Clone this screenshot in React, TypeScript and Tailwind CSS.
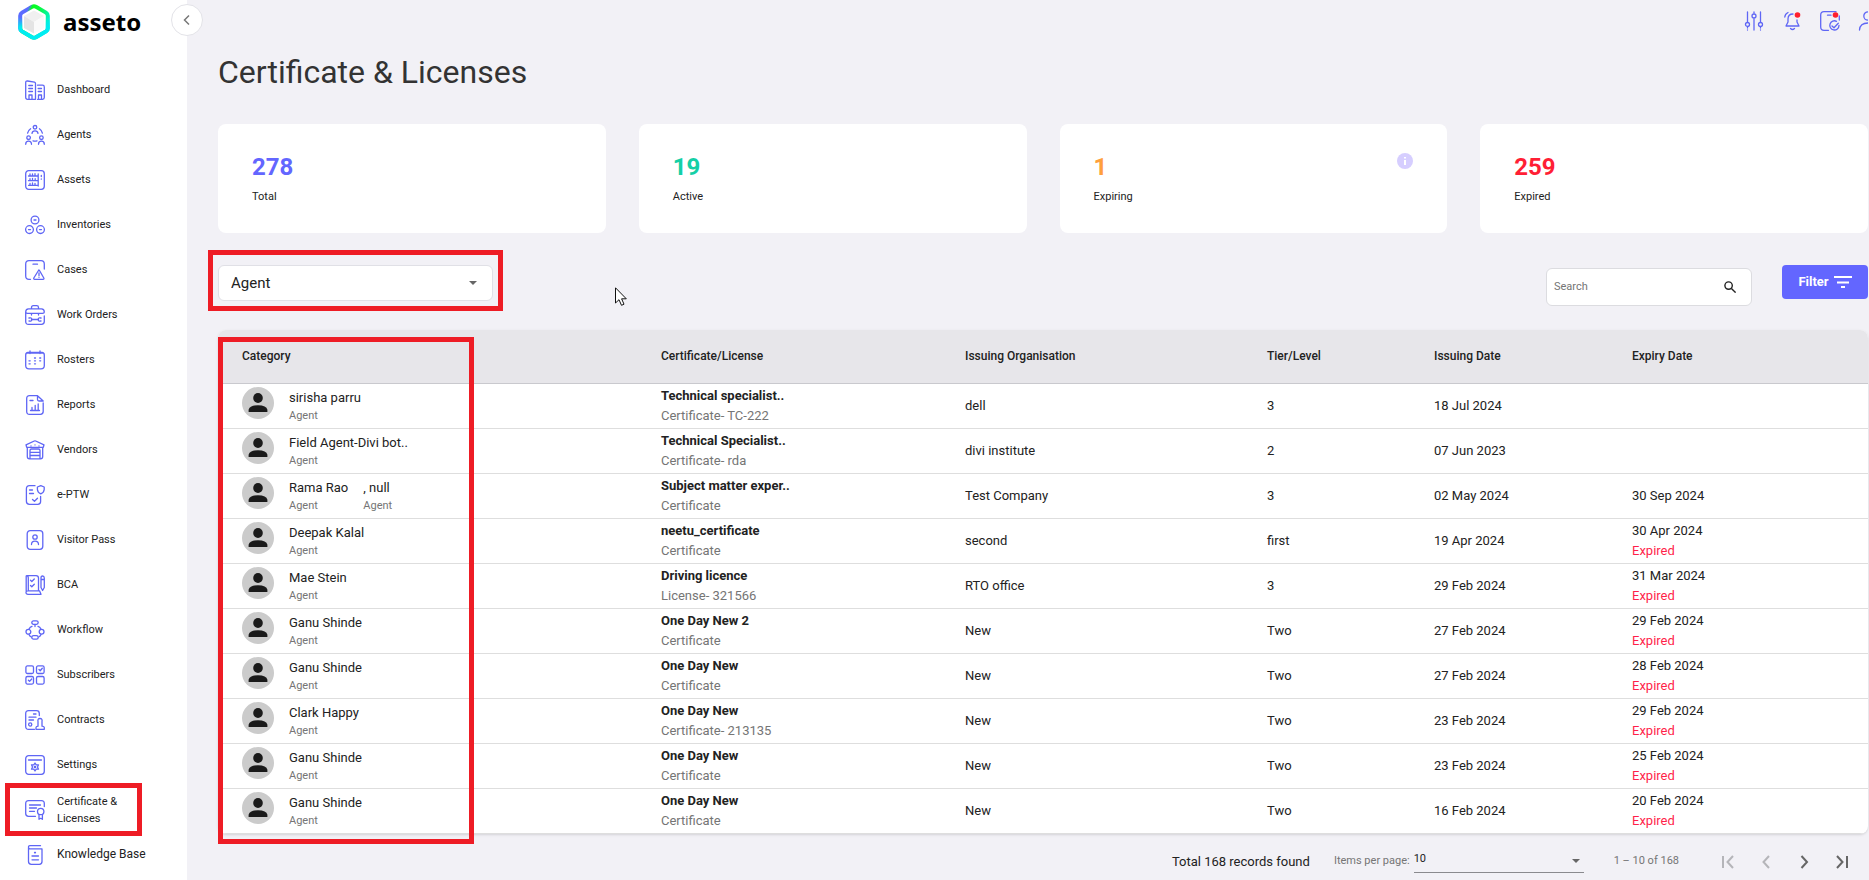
import type { ReactNode } from 'react'

const STATS = [
  { value: '278', label: 'Total', color: 'text-[#6366ff]' },
  { value: '19', label: 'Active', color: 'text-[#14cfa6]' },
  { value: '1', label: 'Expiring', color: 'text-[#ffa03c]', info: true },
  { value: '259', label: 'Expired', color: 'text-[#ff1f35]' },
]

interface Certificate {
  agents: string[]
  title: string
  ref: string
  org: string
  tier: string
  issued: string
  expiry?: string
  expired?: boolean
}

const ROWS: Certificate[] = [
  { agents: ['sirisha parru'], title: 'Technical specialist..', ref: 'Certificate- TC-222', org: 'dell', tier: '3', issued: '18 Jul 2024' },
  { agents: ['Field Agent-Divi bot..'], title: 'Technical Specialist..', ref: 'Certificate- rda', org: 'divi institute', tier: '2', issued: '07 Jun 2023' },
  { agents: ['Rama Rao', ', null'], title: 'Subject matter exper..', ref: 'Certificate', org: 'Test Company', tier: '3', issued: '02 May 2024', expiry: '30 Sep 2024' },
  { agents: ['Deepak Kalal'], title: 'neetu_certificate', ref: 'Certificate', org: 'second', tier: 'first', issued: '19 Apr 2024', expiry: '30 Apr 2024', expired: true },
  { agents: ['Mae Stein'], title: 'Driving licence', ref: 'License- 321566', org: 'RTO office', tier: '3', issued: '29 Feb 2024', expiry: '31 Mar 2024', expired: true },
  { agents: ['Ganu Shinde'], title: 'One Day New 2', ref: 'Certificate', org: 'New', tier: 'Two', issued: '27 Feb 2024', expiry: '29 Feb 2024', expired: true },
  { agents: ['Ganu Shinde'], title: 'One Day New', ref: 'Certificate', org: 'New', tier: 'Two', issued: '27 Feb 2024', expiry: '28 Feb 2024', expired: true },
  { agents: ['Clark Happy'], title: 'One Day New', ref: 'Certificate- 213135', org: 'New', tier: 'Two', issued: '23 Feb 2024', expiry: '29 Feb 2024', expired: true },
  { agents: ['Ganu Shinde'], title: 'One Day New', ref: 'Certificate', org: 'New', tier: 'Two', issued: '23 Feb 2024', expiry: '25 Feb 2024', expired: true },
  { agents: ['Ganu Shinde'], title: 'One Day New', ref: 'Certificate', org: 'New', tier: 'Two', issued: '16 Feb 2024', expiry: '20 Feb 2024', expired: true },
]

function LineIcon({ children }: { children: ReactNode }) {
  return (
    <svg
      viewBox="0 0 20 20"
      className="size-5 shrink-0 overflow-visible"
      fill="none"
      stroke="#5f66f5"
      strokeWidth="1.3"
      strokeLinecap="round"
      strokeLinejoin="round"
      aria-hidden="true"
    >
      {children}
    </svg>
  )
}

const NAV: { label: string; icon: ReactNode }[] = [
  {
    label: 'Dashboard',
    icon: <path d="M2.5 1 9.5 2.2Q10.5 2.4 10.5 3.5V19.3H2.5Q.7 19.3.7 17.5V2.5Q.7.8 2.5 1M12.5 5.2H17.5Q19.3 5.2 19.3 7V17.5Q19.3 19.3 17.5 19.3H12.5M3.8 5.5H7.5M3.8 8.5H7.5M3.8 11.5H7.5M13.2 8.5H16.5M13.2 11.5H16.5M4 19V15H7V19M13.5 19V15H16.5V19" />,
  },
  {
    label: 'Agents',
    icon: (
      <>
        <circle cx="10" cy="2.3" r="1.8" />
        <circle cx="3.6" cy="12.7" r="1.8" />
        <circle cx="16.4" cy="12.7" r="1.8" />
        <path d="M7 8.3Q7.3 5.8 10 5.8T13 8.3M.7 19.3Q.7 16.2 3.6 16.2T6.5 19.3M13.5 19.3Q13.5 16.2 16.4 16.2T19.3 19.3M2.6 8.2Q3.2 5.3 5.6 3.8M14.4 3.8Q16.8 5.3 17.4 8.2M8 15.8Q10 16.6 12 15.8" />
      </>
    ),
  },
  {
    label: 'Assets',
    icon: (
      <>
        <rect x=".7" y=".7" width="18.6" height="18.6" rx="3" />
        <path d="M3.5 6H13M3.5 10.7H13M3.5 15.3H13M13.2 4V16M5 4V6M7.5 4V6M10 3.7V6M5 8.7V10.7M7.5 8.5V10.7M10.2 8.7V10.7M5 13.3V15.3M7.5 13V15.3M10 13.3V15.3M16.3 5.5V6.5M16.3 9V9.2" />
      </>
    ),
  },
  {
    label: 'Inventories',
    icon: (
      <>
        <circle cx="10" cy="5" r="3.9" />
        <circle cx="4.5" cy="14.6" r="3.9" />
        <circle cx="15.5" cy="14.6" r="3.9" />
        <path d="M9 5H11M3.5 14.6H5.5M14.5 14.6H16.5" />
      </>
    ),
  },
  {
    label: 'Cases',
    icon: <path d="M5.5 19.3H4Q.7 19.3.7 16V4Q.7.7 4 .7H16Q19.3.7 19.3 4V9M8 4.2H12.5M13.8 10 8.8 18Q8.3 19.3 9.7 19.3H18Q19.4 19.3 18.8 18L14.2 10Q14 9.6 13.8 10M14 13V15.5M14 17.2V17.3" />,
  },
  {
    label: 'Work Orders',
    icon: (
      <>
        <path d="M6.5 3.5V2.5Q6.5.7 8.3.7H11.7Q13.5.7 13.5 2.5V3.5M19.3 11V16.5Q19.3 19.3 16.5 19.3H3.5Q.7 19.3.7 16.5V7Q.7 3.8 3.5 3.8H16.5Q19.3 3.8 19.3 7Q19.3 8.3 17.5 8.3H2.5Q.7 8.3.7 7M6.5 8.5V10M13.5 8.5V10M6.5 14.5H13.5" />
        <path d="M4 13Q6.8 12.3 6.8 14.5T4 16M16 13Q13.2 12.3 13.2 14.5T16 16" />
      </>
    ),
  },
  {
    label: 'Rosters',
    icon: <path d="M5 1V3.5M15 1V3.5M1.5 3H18.5M3 2.5H17Q19.3 2.7 19.3 5V15.5Q19.3 18.8 16 18.8H4Q.7 18.8.7 15.5V5Q.7 2.7 3 2.5M9.5 8H10.5M14.7 8H15.7M4 10.8H5.2M9.5 10.8H10.5M14.7 10.8H15.7M4 13.8H5.2M9.5 13.8H10.5" />,
  },
  {
    label: 'Reports',
    icon: <path d="M18.2 8V16.5Q18.2 19.3 15.4 19.3H4.5Q1.7 19.3 1.7 16.5V3.5Q1.7.7 4.5.7H12.5L18.2 6H14Q12.5 6 12.5 4.5V.7M5 5.5H8M5.5 15.5H14.5M7 15V12.5M10.2 15V10.5M13.2 15V8.8" />,
  },
  {
    label: 'Vendors',
    icon: <path d="M1 4.8 9.3 1Q10 .7 10.7 1L19 4.8L18.3 7.3H1.7ZM2.3 7.5V16.5Q2.3 18.8 4.5 18.8H15.5Q17.7 18.8 17.7 16.5V7.5M5 18.5V10.5Q5 9 6.5 9H13.5Q15 9 15 10.5V18.5M5.5 12.3H14.5M5.5 15.5H14.5M6 5.8V5.9M10 4.8V4.9M14 5.8V5.9" />,
  },
  {
    label: 'e-PTW',
    icon: <path d="M10 .7H4.5Q1.4.7 1.4 3.8V16.2Q1.4 19.3 4.5 19.3H12.8Q15.6 19.3 15.6 16.5V11.5M4.5 5H7.5M4.5 8.5H8.5M7.5 14.5 9.5 16.3 12.5 13.3M15.8.7 19.2 2V4.5Q19 7.5 15.8 8.8Q12.6 7.5 12.4 4.5V2Z" />,
  },
  {
    label: 'Visitor Pass',
    icon: (
      <>
        <rect x="2.2" y=".7" width="15.6" height="18.6" rx="3" />
        <circle cx="10" cy="7" r="2.2" />
        <path d="M6.5 14.5Q6.5 11.2 10 11.2T13.5 14.5" />
      </>
    ),
  },
  {
    label: 'BCA',
    icon: <path d="M3.3 15V3.5Q3.3.7 1.8.7H11Q13.5.7 13.5 3V15.5M1.2 1V16M3 15.8H14.5L16 19.3H3Q1 19.3 1 17.5T3 15.8M5.5 5.3 6.8 6.5 9.3 4M5.5 10.5 6.8 11.8 9.3 9.3M16 3Q16 1 17.6 1T19.3 3V12.5L17.6 15.5 16 12.5ZM16 4.5H19.3" />,
  },
  {
    label: 'Workflow',
    icon: (
      <>
        <rect x="6.8" y=".9" width="6.4" height="3.4" rx="1.7" />
        <rect x="6.8" y="15.7" width="6.4" height="3.4" rx="1.7" />
        <circle cx="3.4" cy="11.8" r="2.4" />
        <circle cx="16.6" cy="11.8" r="2.4" />
        <path d="M10 4.5V6.5M4.2 8.8Q5 7 7 6.3M13 6.3Q15 7 15.8 8.8M4 14.5Q4.6 16.3 6.3 17M16 14.5Q15.4 16.3 13.7 17" />
      </>
    ),
  },
  {
    label: 'Subscribers',
    icon: (
      <>
        <rect x=".9" y=".9" width="7.6" height="7.6" rx="1.5" />
        <rect x="11.5" y=".9" width="7.6" height="7.6" rx="1.5" />
        <rect x=".9" y="11.5" width="7.6" height="7.6" rx="1.5" />
        <rect x="11.5" y="11.5" width="7.6" height="7.6" rx="1.5" />
        <path d="M14 4.5 15.2 5.7 17.3 3.3M3.4 15.2 4.6 16.4 6.7 14" />
      </>
    ),
  },
  {
    label: 'Contracts',
    icon: (
      <>
        <path d="M9.5 19.3H3.5Q.7 19.3.7 16.5V3.5Q.7.7 3.5.7H11.5Q14.3.7 14.3 3.5V5.5M8.5 4H11M4 7.2H11M4 10H8.5M11 19.3V17.5Q11 16.5 13 16.2V11.5Q12.4 8.5 15 8.5T17 11.5V16.2Q19.3 16.5 19.3 17.5V19.3Z" />
        <circle cx="5.2" cy="14.5" r="1.6" />
      </>
    ),
  },
  {
    label: 'Settings',
    icon: (
      <>
        <rect x=".7" y=".7" width="18.6" height="18.6" rx="3" />
        <path d="M3.5 5H16.5M10 8 11.2 9.8 13.5 9.8 12.5 12 13.5 14.2 11.2 14.2 10 16 8.8 14.2 6.5 14.2 7.5 12 6.5 9.8 8.8 9.8Z" />
        <circle cx="10" cy="12" r=".7" />
      </>
    ),
  },
  {
    label: 'Certificate & Licenses',
    icon: (
      <>
        <path d="M19.3 6.5V3.5Q19.3.7 16.5.7H3.5Q.7.7.7 3.5V13.5Q.7 16.3 3.5 16.3H10.5M4.5 5H15.5M4.5 8H11.5M4.5 11.3H9.5M14 14.5V19.3L15.7 18.3 17.4 19.3V14.5" />
        <circle cx="15.7" cy="11.5" r="3.2" />
      </>
    ),
  },
  {
    label: 'Knowledge Base',
    icon: <path d="M3.5 3V16.5Q3.5 19.3 6.3 19.3H14.3Q17 19.3 17 16.5V3.8H5Q3.5 3.8 3.5 2.2T5 .7H15.5M9.5 7.5H10.5M7 11H13.5M7 14.8H13.5M10 7.5V8" />,
  },
]

function Logo() {
  return (
    <svg viewBox="0 0 32 36" className="h-9 w-8" aria-hidden="true">
      <defs>
        <linearGradient id="ring" x1="0" y1="0.1" x2="1" y2="0.6">
          <stop offset="0" stopColor="#5b6cff" />
          <stop offset="0.22" stopColor="#5b6cff" />
          <stop offset="0.32" stopColor="#05ff1b" />
          <stop offset="0.55" stopColor="#0bf93c" />
          <stop offset="1" stopColor="#00f0d8" />
        </linearGradient>
        <linearGradient id="ringBase" x1="0" y1="0" x2="0" y2="1">
          <stop offset="0" stopColor="#00ecf2" stopOpacity="0" />
          <stop offset="0.5" stopColor="#00ecf2" />
        </linearGradient>
      </defs>
      <path d="M14 2.8Q16 1.8 18 2.8L28 8.6Q29.8 9.7 29.8 11.8V24.2Q29.8 26.3 28 27.4L18 33.2Q16 34.2 14 33.2L4 27.4Q2.2 26.3 2.2 24.2V11.8Q2.2 9.7 4 8.6Z" fill="none" stroke="url(#ring)" strokeWidth="4" />
      <path d="M2.2 13V24.2Q2.2 26.3 4 27.4L14 33.2Q16 34.2 18 33.2L28 27.4Q29.8 26.3 29.8 24.2V13" fill="none" stroke="url(#ringBase)" strokeWidth="4" />
      <path d="M16 6.5 26 12 16 18 6 12Z" fill="#f0f0f0" />
      <path d="M6 12 16 18V29.5L6 24Z" fill="#e4e4e4" />
      <path d="M26 12 16 18V29.5L26 24Z" fill="#fafafa" />
    </svg>
  )
}

function Sidebar() {
  return (
    <aside className="relative w-[187px] shrink-0 bg-white">
      <div className="flex h-[43px] items-center gap-[13px] pl-[18px]">
        <Logo />
        <span className="font-['Noto_Sans'] text-2xl font-bold text-black">asseto</span>
      </div>
      <button
        aria-label="Collapse menu"
        className="absolute top-1 left-[171px] flex size-8 items-center justify-center rounded-full border border-[#e3e3e8] bg-white"
      >
        <svg viewBox="0 0 12 12" className="size-3" fill="none" stroke="#777" strokeWidth="1.5">
          <path d="M8 1.5 3.5 6 8 10.5" />
        </svg>
      </button>
      <nav className="mt-6">
        {NAV.map(item => (
          <a
            key={item.label}
            href="#"
            className={`relative flex h-[45px] items-center gap-3 pl-[25px] leading-[17px] text-[#222] ${
              item.label === 'Knowledge Base' ? 'text-xs' : 'text-[11px]'
            }`}
          >
            <LineIcon>{item.icon}</LineIcon>
            <span className="w-[100px] pr-2">{item.label}</span>
            {item.label === 'Certificate & Licenses' && (
              <span className="absolute -top-1 left-[5px] h-[53px] w-[137px] border-5 border-[#ee1c25]" />
            )}
          </a>
        ))}
      </nav>
    </aside>
  )
}

function TopBar() {
  return (
    <div className="flex h-[42px] items-center justify-end gap-[18px] overflow-hidden">
      <button aria-label="Preferences">
        <LineIcon>
          <path d="M3.5 1V11M3.5 16.5V17M3.5 19V19.1M10 8V19M10 1V2M16.5 1V11M16.5 16.5V17M16.5 19V19.1" />
          <circle cx="3.5" cy="13.5" r="2" />
          <circle cx="10" cy="5" r="2" />
          <circle cx="16.5" cy="13.5" r="2" />
        </LineIcon>
      </button>
      <button aria-label="Notifications">
        <LineIcon>
          <path d="M11 3Q6 3 6 8V11L4 15H17L15 11V9M8.5 17.5Q10.5 19.5 12.5 17.5M6 1.5Q3 3 2.8 6" />
          <circle cx="15.5" cy="4" r="2.8" fill="#ff1f2d" stroke="none" />
        </LineIcon>
      </button>
      <button aria-label="Tasks">
        <LineIcon>
          <path d="M8.5 19.3H4Q.7 19.3.7 16V4Q.7.7 4 .7H16M19.3 5V9M7.5 4.2H11M12 15 14 16.8 18.3 12.3" />
          <path d="M19 14.5A4.6 4.6 0 1 1 16.5 10.3" />
          <circle cx="15.5" cy="4" r="2.8" fill="#ff1f2d" stroke="none" />
        </LineIcon>
      </button>
      <button aria-label="Account" className="-mr-[10px]">
        <LineIcon>
          <circle cx="10" cy="5" r="4.2" />
          <path d="M1.5 19Q2 12 10 12T18.5 19" />
        </LineIcon>
      </button>
    </div>
  )
}

function Avatar() {
  return (
    <svg viewBox="0 0 32 32" className="size-8 shrink-0" aria-hidden="true">
      <circle cx="16" cy="16" r="16" fill="#cbcbcb" />
      <ellipse cx="16" cy="11" rx="4.8" ry="5" fill="#1a1a1a" />
      <path d="M6.6 25V22.8Q7.5 18.2 16 18.2T25.4 22.8V25Z" fill="#1a1a1a" />
    </svg>
  )
}

function StatCard({ value, label, color, info }: (typeof STATS)[number]) {
  return (
    <div className="flex h-[109px] items-start justify-between rounded-lg bg-white px-[34px] pt-[27px]">
      <div>
        <p className={`text-2xl leading-8 font-bold ${color}`}>{value}</p>
        <p className="mt-1 text-[11px] leading-5 text-[#222]">{label}</p>
      </div>
      {info && (
        <svg viewBox="0 0 16 16" className="mt-0.5 size-4" role="img" aria-label="Info">
          <circle cx="8" cy="8" r="8" fill="#d6ceff" />
          <path d="M8 4V5.6M8 7V12" stroke="#fff" strokeWidth="2" />
        </svg>
      )}
    </div>
  )
}

function Toolbar() {
  return (
    <div className="relative mt-8 flex items-start justify-between">
      <div className="relative w-[275px]">
        <select
          aria-label="Category"
          className="h-9 w-full appearance-none rounded-md border border-[#e0e0e6] bg-white pl-3 text-[15px] text-[#222]"
        >
          <option>Agent</option>
        </select>
        <svg viewBox="0 0 8 4" className="pointer-events-none absolute top-4 right-4 h-1 w-2">
          <path d="M0 0H8L4 4Z" fill="#666" />
        </svg>
        <span className="pointer-events-none absolute -inset-x-[10px] -top-[15px] -bottom-[10px] border-5 border-[#ee1c25]" />
      </div>
      <svg viewBox="0 0 12 19" className="absolute top-[22px] left-[397px] h-[19px] w-3">
        <path d="M.5.8V16L4 12.7 6.5 18.3 9 17.2 6.6 11.8H11.3Z" fill="#fff" stroke="#111" />
      </svg>
      <div className="flex items-start gap-[30px]">
        <label className="mt-[3px] flex h-[38px] w-[206px] items-center rounded-md border border-[#dcdce0] bg-white px-[7px]">
          <input
            aria-label="Search"
            placeholder="Search"
            className="w-full min-w-0 flex-1 bg-transparent text-[11px] outline-none placeholder:text-[#757575]"
          />
          <svg viewBox="0 0 12 12" className="mr-2 size-3" fill="none" stroke="#222" strokeWidth="1.4">
            <circle cx="4.6" cy="4.6" r="3.7" />
            <path d="M7.4 7.4 11.6 11.6" />
          </svg>
        </label>
        <button className="flex h-[34px] w-[86px] items-center justify-center gap-[5px] rounded bg-[#6366ff] text-[13px] font-bold text-white">
          Filter
          <svg viewBox="0 0 18 12" className="h-3 w-[18px]" stroke="#fff" strokeWidth="2">
            <path d="M0 1H18M3 6.5H15M7 11H11" />
          </svg>
        </button>
      </div>
    </div>
  )
}

function CertificateTable() {
  return (
    <div className="relative mt-6">
      <div className="overflow-hidden rounded-lg bg-white shadow-sm">
        <table className="w-full table-fixed border-collapse text-left text-[13px] leading-5 text-[#222]">
          <colgroup>
            <col className="w-[443px]" />
            <col className="w-[304px]" />
            <col className="w-[302px]" />
            <col className="w-[167px]" />
            <col className="w-[198px]" />
            <col />
          </colgroup>
          <thead>
            <tr className="h-[53px] border-b border-[#c9c9ce] bg-[#e7e6ea] text-xs">
              <th className="pl-6 font-medium">Category</th>
              <th className="font-medium">Certificate/License</th>
              <th className="font-medium">Issuing Organisation</th>
              <th className="font-medium">Tier/Level</th>
              <th className="font-medium">Issuing Date</th>
              <th className="font-medium">Expiry Date</th>
            </tr>
          </thead>
          <tbody>
            {ROWS.map((row, i) => (
              <tr key={i} className="h-[45px] border-b border-[#dedede]">
                <td className="pl-6">
                  <div className="flex items-start">
                    <Avatar />
                    {row.agents.map(agent => (
                      <div key={agent} className="mt-0.5 ml-[15px]">
                        <p className="leading-[18px]">{agent}</p>
                        <p className="text-[11px] leading-[18px] text-[#757575]">Agent</p>
                      </div>
                    ))}
                  </div>
                </td>
                <td>
                  <p className="font-bold">{row.title}</p>
                  <p className="text-[#757575]">{row.ref}</p>
                </td>
                <td>{row.org}</td>
                <td>{row.tier}</td>
                <td>{row.issued}</td>
                <td>
                  {row.expiry}
                  {row.expired && <p className="text-[#ff1f4b]">Expired</p>}
                </td>
              </tr>
            ))}
          </tbody>
        </table>
      </div>
      <span className="pointer-events-none absolute top-[7px] -bottom-[10px] left-0 w-64 border-5 border-[#ee1c25]" />
    </div>
  )
}

const PAGE_BUTTONS = [
  { label: 'First page', d: 'M2 1V13M12 1 6.5 7 12 13', disabled: true },
  { label: 'Previous page', d: 'M10 1 4.5 7 10 13', disabled: true },
  { label: 'Next page', d: 'M4.5 1 10 7 4.5 13', disabled: false },
  { label: 'Last page', d: 'M2 1 7.5 7 2 13M12 1V13', disabled: false },
]

function Paginator() {
  return (
    <div className="flex h-12 items-center justify-end pt-2 pr-[19px] text-[11px] text-[#757575]">
      <span className="mr-6 text-[13px] text-[#222]">Total 168 records found</span>
      <label className="flex items-center gap-1">
        Items per page:
        <span className="relative w-[170px]">
          <select className="h-[22px] w-full appearance-none border-b border-[#8a8a8e] bg-transparent pb-1 text-[#222]">
            <option>10</option>
          </select>
          <svg viewBox="0 0 8 4" className="pointer-events-none absolute top-2 right-1 h-1 w-2">
            <path d="M0 0H8L4 4Z" fill="#666" />
          </svg>
        </span>
      </label>
      <span className="ml-[30px]">1 – 10 of 168</span>
      <div className="ml-[42px] flex gap-6">
        {PAGE_BUTTONS.map(b => (
          <button key={b.label} aria-label={b.label} disabled={b.disabled} className="text-[#666] disabled:text-[#b5b5b9]">
            <svg viewBox="0 0 14 14" className="size-3.5" fill="none" stroke="currentColor" strokeWidth="2">
              <path d={b.d} />
            </svg>
          </button>
        ))}
      </div>
    </div>
  )
}

export default function App() {
  return (
    <div className="flex h-screen overflow-hidden bg-[#f2f1f6] font-[Roboto,sans-serif]">
      <Sidebar />
      <main className="min-w-0 flex-1 pr-px pl-[31px]">
        <TopBar />
        <h1 className="mt-2 text-[32px] leading-[44px] text-[#333]">Certificate & Licenses</h1>
        <div className="mt-[30px] grid grid-cols-4 gap-[33px]">
          {STATS.map(stat => (
            <StatCard key={stat.label} {...stat} />
          ))}
        </div>
        <Toolbar />
        <CertificateTable />
        <Paginator />
      </main>
    </div>
  )
}
